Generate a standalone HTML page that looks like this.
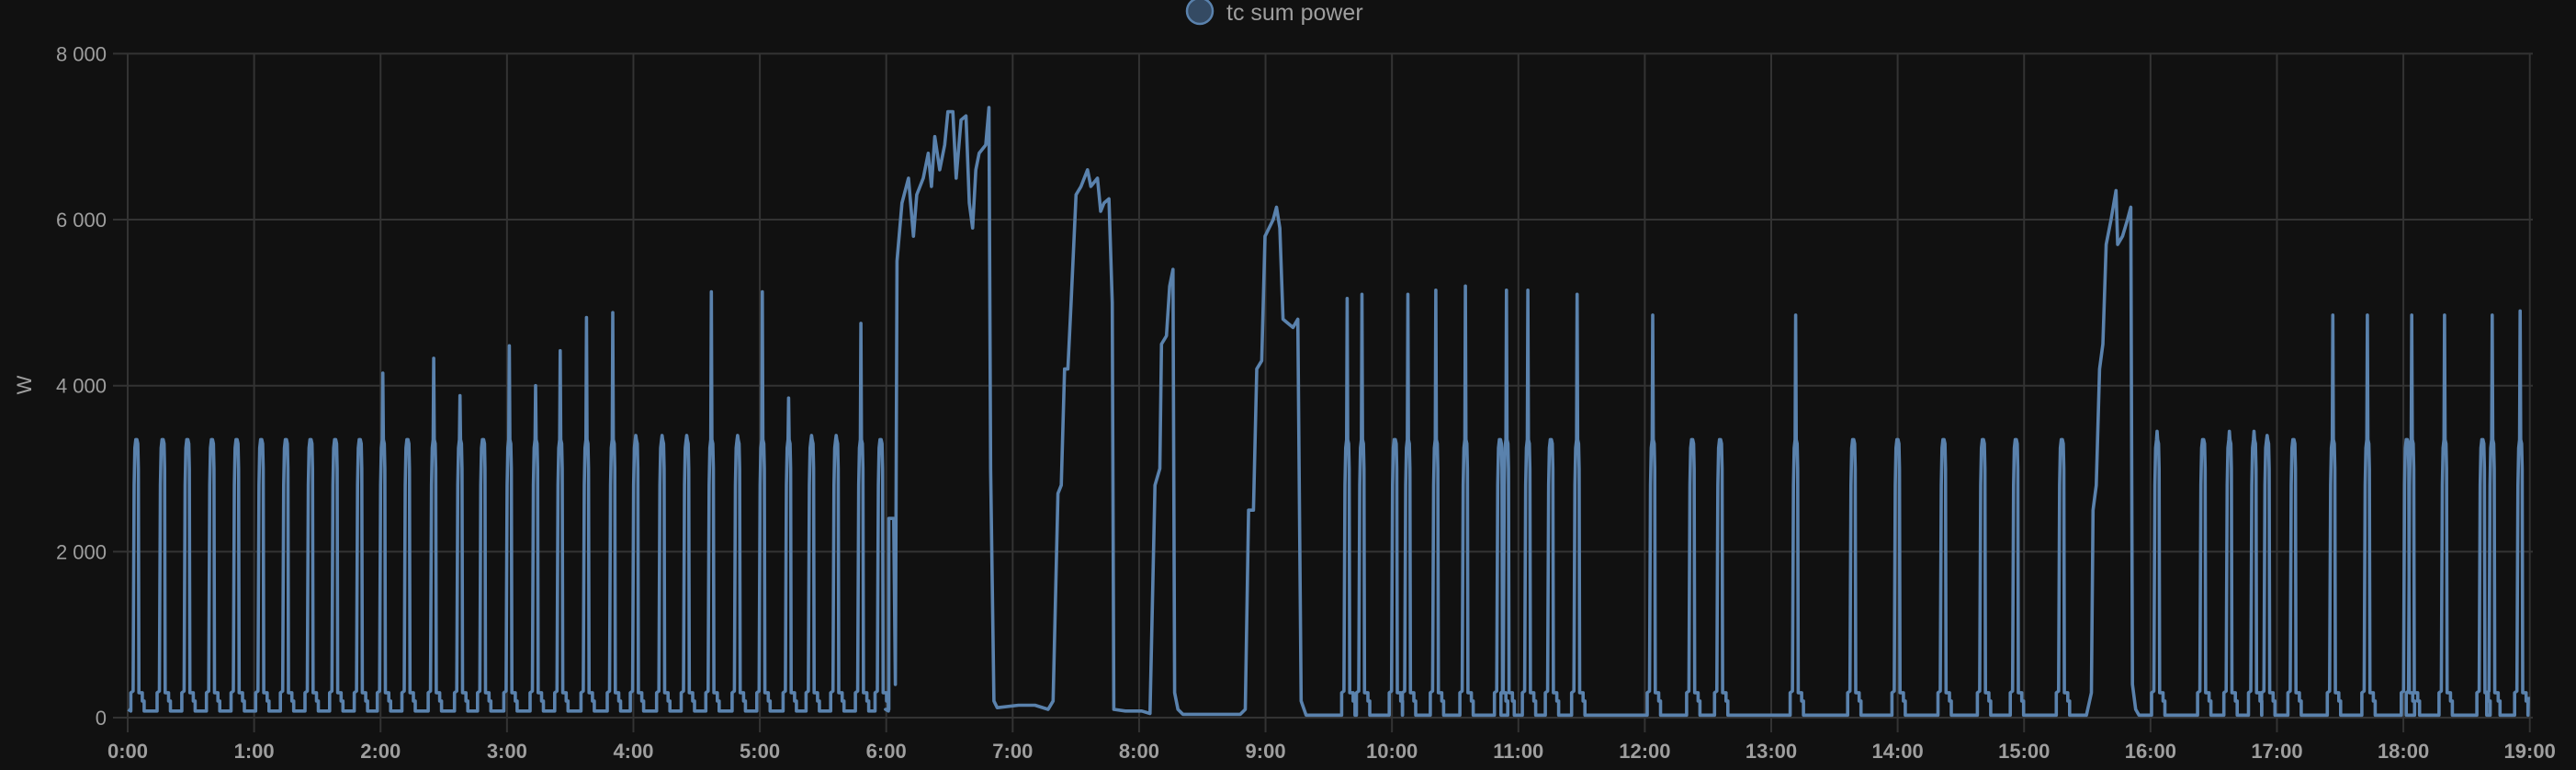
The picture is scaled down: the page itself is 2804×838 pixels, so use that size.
<!DOCTYPE html>
<html><head><meta charset="utf-8"><style>
html,body{margin:0;padding:0;background:#111111;}
svg{display:block;}
text{font-family:"Liberation Sans",sans-serif;fill:#9e9e9e;}
</style></head><body>
<svg id="c" width="2804" height="838" xmlns="http://www.w3.org/2000/svg">
<rect width="2804" height="838" fill="#111111"/>
<g id="grid" stroke="#333333" stroke-width="2"></g>
<g id="lbl"></g>
<circle cx="1306" cy="12" r="14" fill="#344a63" stroke="#5a82ad" stroke-width="2.5"/>
<text x="1335" y="22" font-size="25">tc sum power</text>
<text transform="translate(34,419) rotate(-90)" font-size="22" text-anchor="middle">W</text>
<path id="line" fill="none" stroke="#5a82ad" stroke-width="3.6" stroke-linejoin="round"/>
</svg>
<script>
var NS="http://www.w3.org/2000/svg";
var g=document.getElementById('grid'),l=document.getElementById('lbl');
function el(p,t,a){var e=document.createElementNS(NS,t);for(var k in a)e.setAttribute(k,a[k]);p.appendChild(e);return e;}
var x0=139,hw=(2753.7-139)/19;
for(var i=0;i<=4;i++){var y=781-i*180.65;el(g,'line',{x1:123,x2:2757,y1:y,y2:y});
 var t=el(l,'text',{x:116,y:y+8,'font-size':22,'text-anchor':'end'});t.textContent=i==0?'0':(i*2)+' 000';}
for(var h=0;h<=19;h++){var x=x0+h*hw;el(g,'line',{x1:x,x2:x,y1:58,y2:797});
 var t=el(l,'text',{x:x,y:825,'font-size':22,'font-weight':'bold','text-anchor':'middle'});t.textContent=h+':00';}
var S=2804/1568;
function X(p){return p*S}function Y(v){return 781-v*0.09033}
var pts=[];
function cyc(c,p,b){var o=[[-6,b],[-6,300],[-3.5,320],[-3,1500],[-2.4,2800],[-1.6,3250],[-0.6,3350],[0,p],[0.6,3350],[1.6,3300],[2.2,3000],[2.8,300],[6.5,300],[6.5,200],[8.5,200],[8.5,b]];
 o.forEach(function(q){pts.push([c+q[0]/S,q[1]])});}
pts.push([78,100]);
var A=[[83,3350],[99,3350],[114,3350],[129,3350],[144,3350],[159,3350],[174,3350],[189,3350],[204,3350],[219,3350],[233,4150],[248,3350],[264,4330],[280,3880],[294,3350],[310,4480],[326,4000],[341,4420],[357,4820],[373,4880],[387,3400],[403,3400],[418,3400],[433,5130],[449,3400],[464,5130],[480,3850],[494,3400],[509,3400],[524,4750],[536,3350]];
A.forEach(function(a){cyc(a[0],a[1],80)});
var B=[[539,100],[541,100],[541,2400],[544,2400],[545,400],[546,5500],[549,6200],[553,6500],[556,5800],[558,6300],[562,6500],[565,6800],[567,6400],[569,7000],[572,6600],[575,6900],[577,7300],[580,7300],[582,6500],[585,7200],[588,7250],[590,6200],[592,5900],[594,6600],[596,6800],[600,6900],[602,7350],[603,3000],[605,200],[607,120],[620,150],[630,150],[638,100],[641,200],
[644,2700],[646,2800],[648,4200],[650,4200],[652,5000],[655,6300],[658,6400],[662,6600],[664,6400],[668,6500],[670,6100],[672,6200],[675,6250],[677,5000],[678,100],[685,80],[695,80],[700,50],[703,2800],[706,3000],[707,4500],[710,4600],[712,5200],[714,5400],[715,300],[717,100],[720,40],[755,40],[758,100],[760,2500],[763,2500],[765,4200],[768,4300],[770,5800],[775,6000],[777,6150],[779,5900],[781,4800],[787,4700],[790,4800],[792,200],[795,30]];
pts=pts.concat(B);
var C=[[820,5050],[829,5100],[849,3350],[857,5100],[874,5150],[892,5200],[913,3300],[917,5150],[930,5150],[944,3300],[960,5100],[1006,4850],[1030,3350],[1047,3300],[1093,4850],[1128,3350],[1155,3350],[1183,3350],[1207,3350],[1227,3350],[1255,3350]];
C.forEach(function(a){cyc(a[0],a[1],30)});
pts=pts.concat([[1270,30],[1273,300],[1274,2500],[1276,2800],[1278,4200],[1280,4500],[1282,5700],[1285,6000],[1288,6350],[1289,5700],[1292,5800],[1295,6000],[1297,6150],[1298,400],[1300,100],[1302,30]]);
var D=[[1313,3450],[1341,3350],[1357,3450],[1372,3450],[1380,3400],[1396,3350],[1420,4850],[1441,4850],[1465,3350],[1468,4850],[1488,4850],[1511,3300],[1517,4850],[1534,4900]];
D.forEach(function(a){cyc(a[0],a[1],30)});
pts.push([1539,250]);
var d='';pts.forEach(function(p,i){d+=(i?'L':'M')+X(p[0]).toFixed(1)+' '+Y(p[1]).toFixed(1)});
document.getElementById('line').setAttribute('d',d);
</script>
</body></html>
